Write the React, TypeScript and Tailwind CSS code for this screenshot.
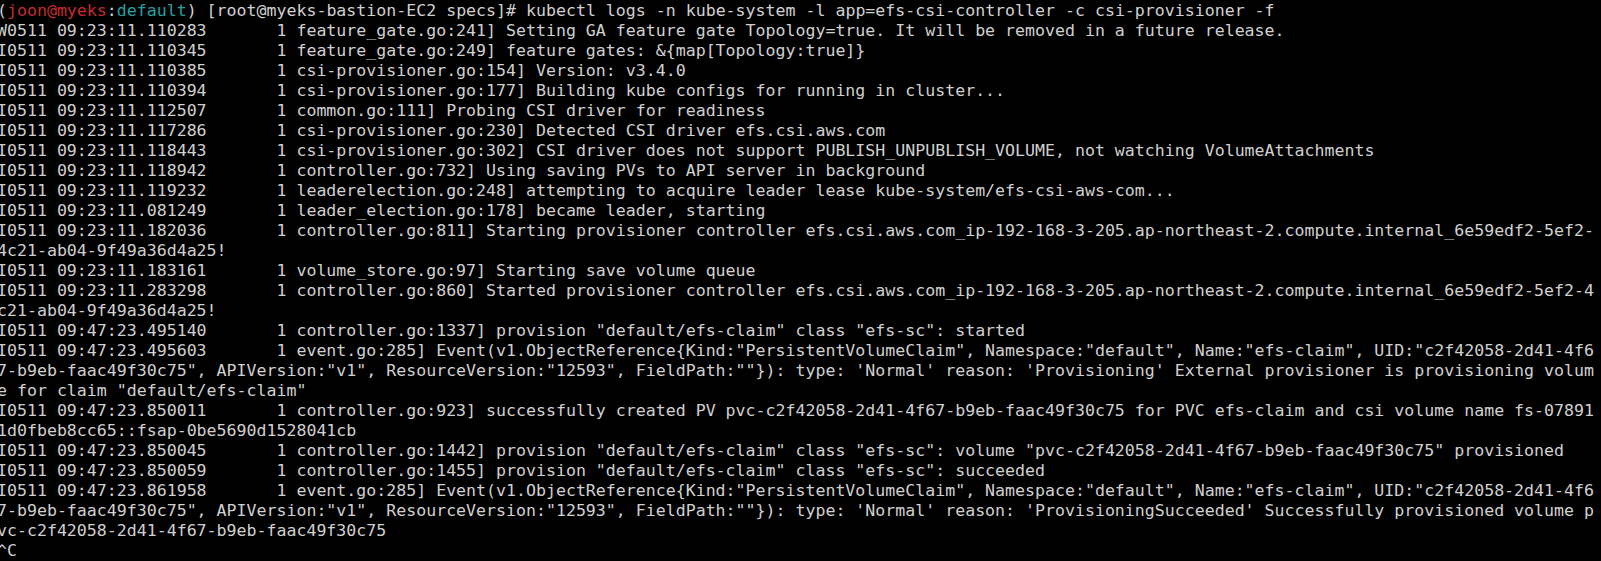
import React from 'react';

// rows exactly as the terminal wrapped them (160 columns)
const logRows: string[] = [
   'W0511 09:23:11.110283       1 feature_gate.go:241] Setting GA feature gate Topology=true. It will be removed in a future release.',
   'I0511 09:23:11.110345       1 feature_gate.go:249] feature gates: &{map[Topology:true]}',
   'I0511 09:23:11.110385       1 csi-provisioner.go:154] Version: v3.4.0',
   'I0511 09:23:11.110394       1 csi-provisioner.go:177] Building kube configs for running in cluster...',
   'I0511 09:23:11.112507       1 common.go:111] Probing CSI driver for readiness',
   'I0511 09:23:11.117286       1 csi-provisioner.go:230] Detected CSI driver efs.csi.aws.com',
   'I0511 09:23:11.118443       1 csi-provisioner.go:302] CSI driver does not support PUBLISH_UNPUBLISH_VOLUME, not watching VolumeAttachments',
   'I0511 09:23:11.118942       1 controller.go:732] Using saving PVs to API server in background',
   'I0511 09:23:11.119232       1 leaderelection.go:248] attempting to acquire leader lease kube-system/efs-csi-aws-com...',
   'I0511 09:23:11.081249       1 leader_election.go:178] became leader, starting',
   'I0511 09:23:11.182036       1 controller.go:811] Starting provisioner controller efs.csi.aws.com_ip-192-168-3-205.ap-northeast-2.compute.internal_6e59edf2-5ef2-',
   '4c21-ab04-9f49a36d4a25!',
   'I0511 09:23:11.183161       1 volume_store.go:97] Starting save volume queue',
   'I0511 09:23:11.283298       1 controller.go:860] Started provisioner controller efs.csi.aws.com_ip-192-168-3-205.ap-northeast-2.compute.internal_6e59edf2-5ef2-4',
   'c21-ab04-9f49a36d4a25!',
   'I0511 09:47:23.495140       1 controller.go:1337] provision "default/efs-claim" class "efs-sc": started',
   'I0511 09:47:23.495603       1 event.go:285] Event(v1.ObjectReference{Kind:"PersistentVolumeClaim", Namespace:"default", Name:"efs-claim", UID:"c2f42058-2d41-4f6',
   '7-b9eb-faac49f30c75", APIVersion:"v1", ResourceVersion:"12593", FieldPath:""}): type: \'Normal\' reason: \'Provisioning\' External provisioner is provisioning volum',
   'e for claim "default/efs-claim"',
   'I0511 09:47:23.850011       1 controller.go:923] successfully created PV pvc-c2f42058-2d41-4f67-b9eb-faac49f30c75 for PVC efs-claim and csi volume name fs-07891',
   '1d0fbeb8cc65::fsap-0be5690d1528041cb',
   'I0511 09:47:23.850045       1 controller.go:1442] provision "default/efs-claim" class "efs-sc": volume "pvc-c2f42058-2d41-4f67-b9eb-faac49f30c75" provisioned',
   'I0511 09:47:23.850059       1 controller.go:1455] provision "default/efs-claim" class "efs-sc": succeeded',
   'I0511 09:47:23.861958       1 event.go:285] Event(v1.ObjectReference{Kind:"PersistentVolumeClaim", Namespace:"default", Name:"efs-claim", UID:"c2f42058-2d41-4f6',
   '7-b9eb-faac49f30c75", APIVersion:"v1", ResourceVersion:"12593", FieldPath:""}): type: \'Normal\' reason: \'ProvisioningSucceeded\' Successfully provisioned volume p',
   'vc-c2f42058-2d41-4f67-b9eb-faac49f30c75',
   '^C',
];

const Prompt: React.FC = () => (
   <div>
      (<span className="text-[#c62a2a]">joon@myeks</span>:
      <span className="text-[#22a3a3]">default</span>) [root@myeks-bastion-EC2
      specs]# kubectl logs -n kube-system -l app=efs-csi-controller -c
      csi-provisioner -f
   </div>
);

export default function App() {
   return (
      <div className="h-screen w-full bg-black overflow-hidden">
         <div className="ml-[-3px] pt-[1px] whitespace-pre text-[#d0d0d0] text-[16.58px] leading-[20px] font-['DejaVu_Sans_Mono',monospace]">
            <Prompt />
            {logRows.map((row, i) => (
               <div key={i}>{row}</div>
            ))}
         </div>
      </div>
   );
}
